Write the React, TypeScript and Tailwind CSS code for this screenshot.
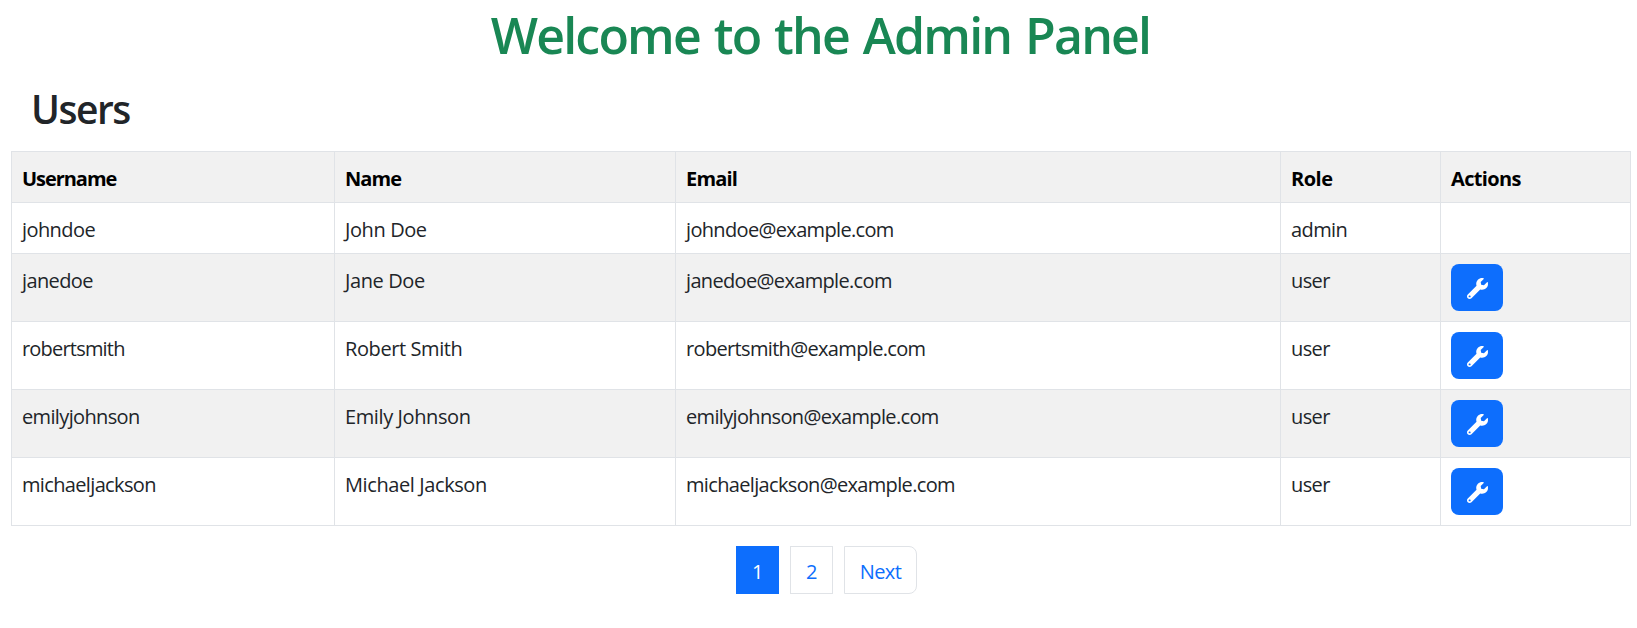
import { FaWrench } from "react-icons/fa";

type User = { username: string; name: string; email: string; role: string; tracking: string };

const users: User[] = [
  { username: "johndoe", name: "John Doe", email: "johndoe@example.com", role: "admin", tracking: "tracking-[-0.58px]" },
  { username: "janedoe", name: "Jane Doe", email: "janedoe@example.com", role: "user", tracking: "tracking-[-0.62px]" },
  { username: "robertsmith", name: "Robert Smith", email: "robertsmith@example.com", role: "user", tracking: "tracking-[-0.8px]" },
  { username: "emilyjohnson", name: "Emily Johnson", email: "emilyjohnson@example.com", role: "user", tracking: "tracking-[-0.64px]" },
  { username: "michaeljackson", name: "Michael Jackson", email: "michaeljackson@example.com", role: "user", tracking: "tracking-[-0.65px]" },
];

const columns = [
  { label: "Username", tracking: "tracking-[-1.05px]" },
  { label: "Name", tracking: "tracking-[-0.9px]" },
  { label: "Email", tracking: "tracking-[-0.8px]" },
  { label: "Role", tracking: "tracking-[-0.5px]" },
  { label: "Actions", tracking: "tracking-[-0.65px]" },
];

const cell = "border border-[#e0e3e7] pr-[10px] pl-[10px] align-top";
const textCell = "pt-[12px] pb-[8px]";

export default function App() {
  return (
    <main className="h-[628px] overflow-hidden bg-white font-['Open_Sans','Noto_Sans',sans-serif] text-[20px] leading-[30px] tracking-[-0.4px] text-[#212529]">
      <h1 className="pt-[5px] pr-0 pl-1 text-center text-[50px] leading-[60px] font-semibold tracking-[-1.8px] [word-spacing:2.5px] text-[#198754]">
        Welcome to the Admin Panel
      </h1>
      <h2 className="pt-[20px] pl-[31px] text-[39px] leading-[48px] font-semibold tracking-[-1.5px]">Users</h2>
      <table className="mt-[18px] ml-[11px] w-[1620px] table-fixed border-collapse">
        <colgroup>
          <col className="w-[323px]" />
          <col className="w-[341px]" />
          <col className="w-[605px]" />
          <col className="w-[160px]" />
          <col className="w-[190px]" />
        </colgroup>
        <thead>
          <tr className="h-[51px] bg-[#f1f1f1] text-left text-black">
            {columns.map((c) => (
              <th key={c.label} className={`${cell} ${textCell} font-bold ${c.tracking}`}>{c.label}</th>
            ))}
          </tr>
        </thead>
        <tbody>
          {users.map((u) => (
            <tr key={u.username} className={`${u.role === "admin" ? "h-[51px]" : "h-[68px]"} even:bg-[#f1f1f1]`}>
              <td className={`${cell} ${textCell} ${u.tracking}`}>{u.username}</td>
              <td className={`${cell} ${textCell}`}>{u.name}</td>
              <td className={`${cell} ${textCell} tracking-[-0.66px]`}>{u.email}</td>
              <td className={`${cell} ${textCell} tracking-[-0.6px]`}>{u.role}</td>
              <td className={`${cell} py-[10px]`}>
                {u.role !== "admin" && (
                  <button aria-label="Edit" className="flex h-[47px] w-[52px] items-center justify-center rounded-[8px] bg-[#0d6efd] pt-px text-white">
                    <FaWrench className="size-[21px]" />
                  </button>
                )}
              </td>
            </tr>
          ))}
        </tbody>
      </table>
      <nav className="mt-[20px] flex gap-[11px] pl-[736px] text-[#0d6efd]">
        <a className="flex h-[48px] w-[43px] items-center justify-center bg-[#0d6efd] pt-[3px] text-white">1</a>
        <a className="flex h-[48px] w-[43px] items-center justify-center border border-[#e0e3e7] pt-[3px]">2</a>
        <a className="flex h-[48px] w-[73px] items-center justify-center rounded-r-[8px] border border-[#e0e3e7] pt-[3px] tracking-[-0.6px]">Next</a>
      </nav>
    </main>
  );
}
